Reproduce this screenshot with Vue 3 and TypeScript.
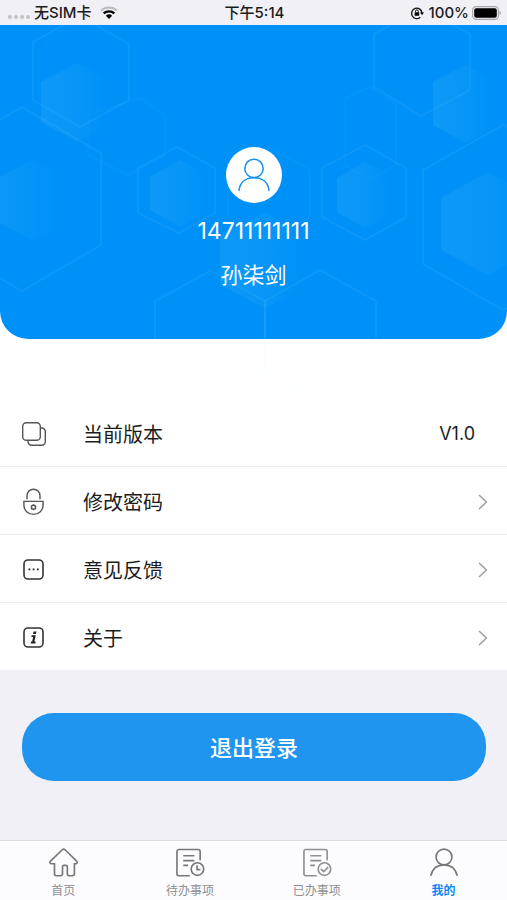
<script setup lang="ts">
interface MenuItem {
  icon: 'copy' | 'lock' | 'feedback' | 'info'
  label: string
  value?: string
}

interface TabItem {
  icon: 'home' | 'todo' | 'done' | 'me'
  label: string
  active?: boolean
}

const phone = '14711111111'
const userName = '孙柒剑'

const menu: MenuItem[] = [
  { icon: 'copy', label: '当前版本', value: 'V1.0' },
  { icon: 'lock', label: '修改密码' },
  { icon: 'feedback', label: '意见反馈' },
  { icon: 'info', label: '关于' },
]

const tabs: TabItem[] = [
  { icon: 'home', label: '首页' },
  { icon: 'todo', label: '待办事项' },
  { icon: 'done', label: '已办事项' },
  { icon: 'me', label: '我的', active: true },
]

const outlines: string[] = [
  '80,16 129,44 129,100 80,127 33,100 33,42',
  '22,107 101,153 101,245 22,291 -57,245 -57,153',
  '177,147 215,168 215,213 179,233 138,213 138,168',
  '365,145 406,168 406,217 365,240 322,217 322,168',
  '503,125 583,170 583,264 503,310 423,264 423,170',
  '421,8 470,34 470,90 421,116 374,87 374,34',
  '210,271 265,301 265,368 210,396 155,368 155,301',
  '320,270 376,301 376,368 318,400 265,368 265,301',
]

const faintOutlines: string[] = [
  '270,148 310,170 310,217 270,240 228,217 228,170',
  '370,87 396,104 396,165 370,180 345,165 345,98',
  '140,98 165,115 165,155 128,175 88,155 88,115',
]

const fills: string[] = [
  '41,82 77,63 112,82 112,122 77,142 41,122',
  '-28,190 33,160 65,178 65,225 33,240 -28,210',
  '150,177 180,160 210,177 210,210 180,227 150,210',
  '337,178 365,162 395,178 395,212 365,228 337,212',
  '441,198 488,172 535,198 535,250 488,275 441,250',
  '433,82 465,65 497,82 497,125 465,143 433,125',
  '220,235 265,213 310,235 310,285 265,308 220,285',
]
</script>

<template>
  <div class="screen">
    <header class="status">
      <div class="status-side">
        <span class="dots"><i></i><i></i><i></i><i></i></span>
        <span class="carrier">无SIM卡</span>
        <svg class="wifi" viewBox="0 0 18 13" aria-hidden="true">
          <path d="M1 4.6a11.6 11.6 0 0 1 16 0" fill="none" stroke="#b9b9be" stroke-width="2" />
          <path d="M3.7 7.4a7.7 7.7 0 0 1 10.6 0" fill="none" stroke="#000" stroke-width="2.3" />
          <path d="M9 13 5.9 9.7a4.6 4.6 0 0 1 6.2 0z" />
        </svg>
      </div>
      <time class="clock">下午5:14</time>
      <div class="status-side right">
        <svg class="rotation" viewBox="0 0 14 14" aria-hidden="true">
          <path d="M10.3 11.3A5.2 5.2 0 1 1 12 7" fill="none" stroke="#111" stroke-width="1.3" />
          <path d="M10 6.4h4l-2 2.7z" />
          <rect x="4.6" y="6.3" width="4.6" height="3.4" rx=".5" />
          <path d="M5.5 6.5V5.3a1.4 1.4 0 0 1 2.8 0v1.2" fill="none" stroke="#111" />
        </svg>
        <span class="percent">100%</span>
        <svg class="battery" viewBox="0 0 29 14" aria-hidden="true">
          <rect x=".6" y=".6" width="25.8" height="12.8" rx="3.6" fill="none" stroke="#a5a5aa" stroke-width="1.1" />
          <rect x="2.2" y="2.2" width="22.6" height="9.6" rx="2" />
          <path d="M27.6 4.8v4.4c1-.4 1.4-1.2 1.4-2.2s-.4-1.8-1.4-2.2z" fill="#a5a5aa" />
        </svg>
      </div>
    </header>

    <main>
      <section class="hero">
        <svg class="pattern" viewBox="0 25 507 374" aria-hidden="true">
          <defs>
            <linearGradient id="glow" x1="0" y1="0" x2="1" y2="0">
              <stop offset="0" stop-color="#37b3f8" stop-opacity=".24" />
              <stop offset=".5" stop-color="#37b3f8" stop-opacity=".13" />
              <stop offset=".9" stop-color="#37b3f8" stop-opacity="0" />
            </linearGradient>
          </defs>
          <polygon v-for="points in fills" :key="points" :points="points" fill="url(#glow)" />
          <polygon v-for="points in outlines" :key="points" :points="points" class="outline" />
          <polygon v-for="points in faintOutlines" :key="points" :points="points" class="outline faint" />
        </svg>
        <div class="profile">
          <svg class="avatar" viewBox="0 0 56 56" aria-hidden="true">
            <circle cx="28" cy="28" r="28" fill="#fff" />
            <g fill="none" stroke="#1a8fe6" stroke-width="1.5" stroke-linecap="round">
              <circle cx="28" cy="21.4" r="9.2" />
              <path d="M13 43.5C14 35 20 30.7 28 30.7S42 35 43 43.5" />
            </g>
          </svg>
          <p class="phone">{{ phone }}</p>
          <p>{{ userName }}</p>
        </div>
      </section>

      <ul class="menu">
        <li v-for="item in menu" :key="item.label">
          <component :is="item.value ? 'div' : 'a'" class="row" :href="item.value ? undefined : '#'">
            <svg class="row-icon" viewBox="0 0 24 24" aria-hidden="true">
              <g v-if="item.icon === 'copy'" class="thin">
                <rect x=".7" y=".7" width="17.6" height="17.6" rx="3.6" />
                <path d="M18.6 6h1.2a3.5 3.5 0 0 1 3.5 3.5v10.3a3.5 3.5 0 0 1-3.5 3.5H9.5A3.5 3.5 0 0 1 6 19.8v-1.2" />
              </g>
              <g v-else-if="item.icon === 'lock'" class="thin">
                <path d="M5 9.2V5.7a6.5 6.5 0 0 1 13 0v3.5M1.9 11.4h19.2V15c0 5.200-4.200 9.400-9.600 9.400S1.900 20.200 1.900 15z" />
                <circle cx="11.5" cy="17.3" r="2" />
                <path d="M11.5 14.3v1M11.5 19.3v1M8.9 15.8l.9.5M13.2 18.3l.9.5M14.1 15.8l-.9.5M9.8 18.3l-.9.5" />
              </g>
              <g v-else-if="item.icon === 'feedback'">
                <rect x="2" y="2" width="19" height="19" rx="4" />
                <path class="solid" d="M6.500 10.500h1.800v1.800H6.500zM10.700 10.500h1.800v1.800h-1.800zM14.900 10.500h1.800v1.800h-1.800z" />
              </g>
              <g v-else>
                <rect x="2" y="2" width="19" height="19" rx="4" />
                <path class="solid" d="M11.6 5.5h2.900l-.6 2.600H11zM9.700 9.200h4.100l-1.400 6.400h1.300l-.4 1.800H8.700l.4-1.800h1.100l.9-4.600H9.300z" />
              </g>
            </svg>
            <span class="row-label">{{ item.label }}</span>
            <span v-if="item.value" class="row-value">{{ item.value }}</span>
            <svg v-else class="chevron" viewBox="0 0 10 16" aria-hidden="true">
              <path d="M1 1l7.500 7L1 15" />
            </svg>
          </component>
        </li>
      </ul>

      <div class="actions">
        <button type="button" class="logout">退出登录</button>
      </div>
    </main>

    <nav class="tabs">
      <a v-for="tab in tabs" :key="tab.label" href="#" class="tab" :class="{ active: tab.active }">
        <svg class="tab-icon" :class="tab.icon" viewBox="0 0 30 30" aria-hidden="true">
          <path
            v-if="tab.icon === 'home'"
            d="M14.300 1.800a2 2 0 0 1 2.800 0L29.100 13.500c1.200 1.300.4 2.800-1 2.800h-1.300v10.400c0 1.200-.8 2-2 2h-3.300c-1.200 0-2-.8-2-2v-7.200c0-1-.5-1.600-1.400-1.600h-2.200c-.9 0-1.400.6-1.400 1.600v7.200c0 1.200-.8 2-2 2H8.200c-1.200 0-2-.8-2-2V16.300H3.100c-1.400 0-2.200-1.500-1-2.800z"
          />
          <g v-else-if="tab.icon === 'me'">
            <circle cx="15" cy="9.300" r="8.200" />
            <path d="M1.300 28.700C3 21.300 8 17.600 15 17.600s12 3.700 13.700 11.100" />
          </g>
          <g v-else>
            <path d="M25.500 12.800V3.500a2 2 0 0 0-2-2h-20a2 2 0 0 0-2 2v23.200a2 2 0 0 0 2 2h11.300M8 8h11.500M8 13h11.500M8 18h5" />
            <circle cx="22.700" cy="21.800" r="6.500" />
            <path v-if="tab.icon === 'todo'" d="M22.300 17.800v4.600h3.500" />
            <path v-else d="M19 21.600l2.900 2.900 4.700-4.700" />
          </g>
        </svg>
        <span>{{ tab.label }}</span>
      </a>
    </nav>
  </div>
</template>

<style>
body {
  margin: 0;
  background: #f0f0f6;
}
</style>

<style scoped>
.screen {
  display: flex;
  flex-direction: column;
  min-height: 100vh;
  background: #f0f0f6;
  color: #1c1c1c;
  font-family: Inter, "Noto Sans CJK SC", sans-serif;
}

.status {
  display: flex;
  align-items: center;
  height: 25px;
  padding: 0 6px 0 8px;
  font-size: 15px;
  font-weight: 500;
  line-height: 25px;
}

.status-side {
  display: flex;
  flex: 1;
  align-items: center;
}

.right {
  justify-content: flex-end;
}

.dots {
  display: flex;
  gap: 2px;
  padding-top: 8px;
  margin-right: 4px;
}

.dots i {
  width: 4px;
  height: 4px;
  border-radius: 50%;
  background: #c2c2c6;
}

.wifi {
  width: 18px;
  height: 13px;
  margin-left: 9px;
}

.rotation {
  width: 14px;
  height: 14px;
  margin-right: 5px;
}

.battery {
  width: 29px;
  height: 14px;
  margin-left: 3px;
}

.hero {
  position: relative;
  background: #fff;
  padding-bottom: 60px;
}

.hero::before {
  content: "";
  position: absolute;
  inset: 0 0 60px;
  border-radius: 0 0 28px 28px;
  background: #0091f8;
}

.pattern {
  position: absolute;
  top: 0;
  left: 0;
  width: 100%;
  height: 100%;
}

.outline {
  fill: none;
  stroke: #b4fbfa;
  stroke-opacity: 0.07;
  stroke-width: 1.6;
}

.faint {
  stroke-opacity: 0.03;
}

.profile {
  position: relative;
  display: flex;
  flex-direction: column;
  align-items: center;
  padding: 122px 0 48px;
  color: #fff;
  font-size: 22px;
  line-height: 32px;
}

.profile p {
  margin: 12px 0 0;
}

.profile .phone {
  font-size: 23px;
}

.avatar {
  width: 56px;
  height: 56px;
}

.menu {
  margin: 0;
  padding: 0;
  list-style: none;
  background: #fff;
}

.menu li + li {
  border-top: 1px solid #ececee;
}

.row {
  display: flex;
  box-sizing: border-box;
  align-items: center;
  height: 67px;
  padding: 2px 19px 0 22px;
  color: inherit;
  font-size: 20px;
  text-decoration: none;
}

.row-icon {
  width: 24px;
  height: 24px;
  margin-right: 37px;
  overflow: visible;
  fill: none;
  stroke: #333;
  stroke-width: 1.6;
}

.thin {
  stroke: #555;
  stroke-width: 1.4;
}

.solid {
  fill: #222;
  stroke: none;
}

.row-label {
  flex: 1;
}

.row-value {
  padding-right: 13px;
  font-size: 18px;
}

.chevron {
  width: 10px;
  height: 16px;
  fill: none;
  stroke: #999;
  stroke-width: 1.4;
}

.actions {
  padding: 43px 21px 43px 22px;
}

.logout {
  display: block;
  width: 100%;
  height: 68px;
  padding: 0 0 3px;
  border: 0;
  border-radius: 32px;
  background: #2095ef;
  color: #fff;
  font: inherit;
  font-size: 22px;
  font-weight: 500;
}

.tabs {
  display: flex;
  height: 59px;
  margin-top: auto;
  border-top: 1px solid #dcdce0;
  background: #fcfcfe;
}

.tab {
  display: flex;
  flex: 1;
  flex-direction: column;
  align-items: center;
  gap: 5px;
  padding-top: 7px;
  color: #8e8e90;
  font-size: 12px;
  line-height: 18px;
  text-decoration: none;
}

.active {
  color: #0f86f5;
  font-weight: 700;
}

.tab-icon {
  width: 30px;
  height: 30px;
  fill: none;
  stroke: #77777a;
  stroke-width: 1.7;
}

.done {
  stroke: #909093;
}
</style>
